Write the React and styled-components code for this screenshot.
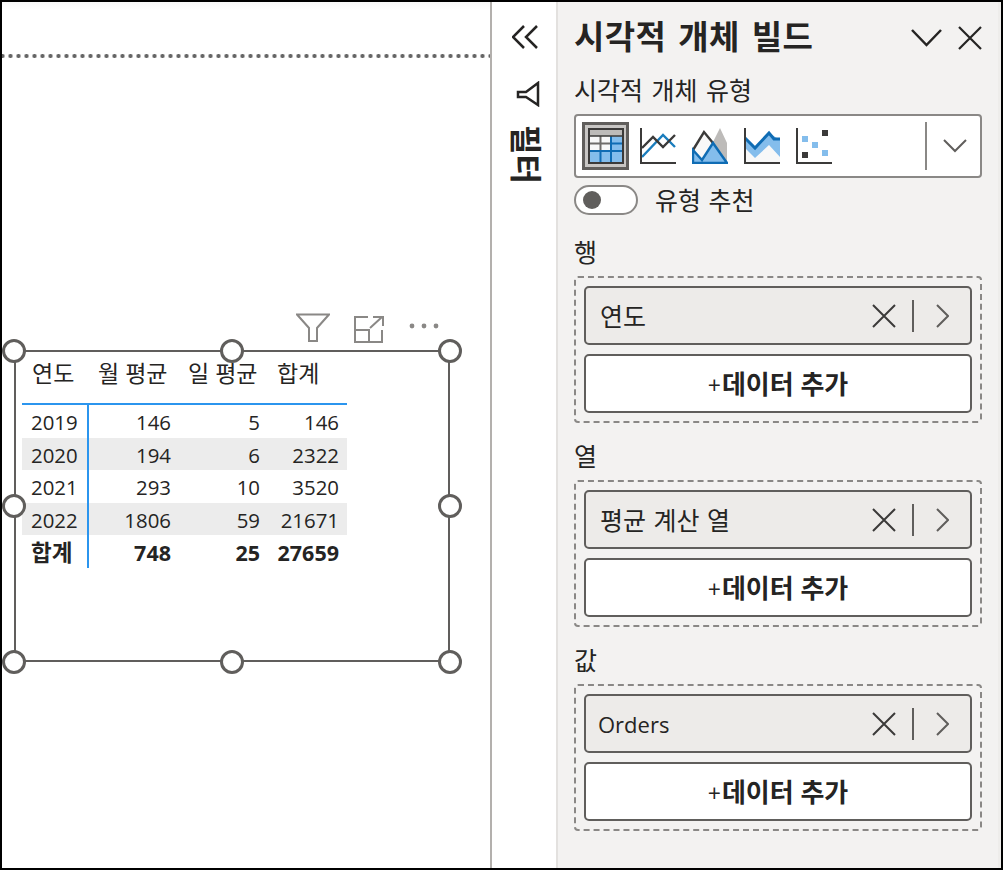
import React from "react";
import styled, { createGlobalStyle } from "styled-components";

const Global = createGlobalStyle`
  html, body { margin: 0; padding: 0; background: #fff; }
  body { font-family: "Open Sans", "Noto Sans CJK KR", sans-serif; color: #252423; }
`;

const Frame = styled.div`
  width: 1003px; height: 870px; box-sizing: border-box;
  border: 2px solid #000; display: flex; overflow: hidden; background: #fff;
`;
const Canvas = styled.main`
  position: relative; width: 488px; height: 100%; flex: none;
  border-right: 2px solid #b3b0ad; box-sizing: content-box;
  background: linear-gradient(#f8f8f8, #fff 8px);
`;
const DottedRule = styled.div`
  position: absolute; left: 0; top: 52px; width: 100%; height: 4px;
  background: radial-gradient(circle at 2px 2px, #666 1.9px, transparent 2.3px) -1.5px 0 / 8px 4px repeat-x;
`;
const VisualHeader = styled.div`
  position: absolute; left: 294px; top: 311px; display: flex; align-items: center;
`;
const Visual = styled.section`
  position: absolute; left: 12px; top: 348px; width: 436px; height: 312px; box-sizing: border-box;
  border: 2.5px solid #605e5c; padding: 1px 0 0 6px;
`;
const Handle = styled.span`
  position: absolute; width: 24px; height: 24px; box-sizing: border-box;
  border: 3px solid #605e5c; border-radius: 50%; background: #fff;
  left: ${p => p.$x}px; top: ${p => p.$y}px;
`;
const Table = styled.div`
  display: grid; grid-template-columns: 67px 90px 89px 79px; width: 325px;
  font-size: 20px;
`;
const Head = styled.div`
  height: 52px; padding-top: 4px; box-sizing: border-box; line-height: 32px; padding-left: ${p => p.$pl}px;
  border-bottom: 2px solid #2b95ee; white-space: nowrap; font-size: 23px;
`;
const Cell = styled.div`
  text-align: ${p => p.$first ? "left" : "right"};
  padding: ${p => p.$first ? "3px 0 0 9px" : "3px 8px 0 0"};
  background: ${p => p.$alt ? "#ececec" : "transparent"};
  font-weight: ${p => p.$bold ? 700 : 400};
  font-size: ${p => p.$bold ? (p.$first ? "22.5px" : "21.5px") : "20.4px"};
  line-height: 29px;
  border-right: ${p => p.$first ? "2px solid #2b95ee" : "0"};
  white-space: nowrap;
  box-sizing: border-box;
  height: 32.6px;
`;

const Rail = styled.aside`
  width: 64px; flex: none; display: flex; flex-direction: column; align-items: center;
  padding-top: 23px; border-right: 2px solid #e3e1df; box-sizing: content-box;
`;
const RailIcon = styled.div`
  display: flex; margin-bottom: ${p => p.$mb}px; margin-left: ${p => p.$ml}px;
`;
const RailLabel = styled.div`
  writing-mode: vertical-rl; text-orientation: sideways; font-weight: 700; font-size: 32px; line-height: 32px;
  color: #252423; margin-left: 4px;
`;
const Panel = styled.aside`
  flex: 1; background: #f3f2f1; padding: 0 16px 0 16px; box-sizing: border-box;
  border-right: 3px solid #eeedeb; min-width: 0;
`;
const TitleBar = styled.header`
  height: 70px; display: flex; align-items: center; justify-content: space-between;
`;
const Title = styled.h1`
  margin: 0; font-size: 33px; font-weight: 700; line-height: 70px; letter-spacing: 0.4px; word-spacing: 3px;
`;
const TitleIcons = styled.div`display: flex; align-items: center; gap: 16px; margin-top: 2px;`;
const Label = styled.div`
  font-size: 25px; line-height: 36px; height: 36px; word-spacing: 2px;
`;
const SectionLabel = styled(Label)`
  line-height: 41px;
`;
const TypeBox = styled.div`
  height: 64px; box-sizing: border-box; border: 2px solid #8a8886; border-radius: 4px; background: #fff;
  display: flex; align-items: center; padding: 0 13px 0 6px; margin-top: 6px;
`;
const SelectedType = styled.div`
  width: 47px; height: 48px; box-sizing: border-box; border: 3px solid #605e5c; background: #c8c6c4;
  display: flex; align-items: center; justify-content: center; margin-right: 11px;
`;
const TypeIcons = styled.div`display: flex; gap: 16px; flex: 1;`;
const TypeDivider = styled.div`width: 2px; height: 48px; background: #8a8886; margin-right: 16px;`;
const ToggleRow = styled.div`display: flex; align-items: center; margin-top: 7px; gap: 17px; height: 30px;`;
const Toggle = styled.div`
  width: 64px; height: 30px; box-sizing: border-box; border: 2px solid #8a8886; border-radius: 15px; background: #fff;
  display: flex; align-items: center; padding-left: 7px;
`;
const Knob = styled.span`width: 18px; height: 18px; border-radius: 50%; background: #605e5c;`;
const ToggleText = styled.div`font-size: 25px; line-height: 28px; word-spacing: 1px;`;
const Section = styled.section`margin-top: ${p => p.$mt}px;`;
const Well = styled.div`
  height: 147px; box-sizing: border-box; border: 2px dashed #8a8886; border-radius: 4px; padding: 8px;
  display: flex; flex-direction: column; gap: 9px; margin-top: 8px; background: transparent;
`;
const Field = styled.div`
  height: 59px; box-sizing: border-box; border: 2px solid #605e5c; border-radius: 5px; background: #edebe9;
  display: flex; align-items: center; padding: 0 21px 0 ${p => p.$pl}px;
`;
const FieldName = styled.span`
  flex: 1; font-size: ${p => p.$latin ? 22 : 25}px; word-spacing: 1px; white-space: nowrap; line-height: 30px;
  margin-top: ${p => p.$latin ? 1 : 0}px;
`;
const FieldSep = styled.span`width: 2px; height: 32px; background: #605e5c; margin: 0 22px 0 16px;`;
const AddButton = styled.div`
  height: 59px; box-sizing: border-box; border: 2px solid #605e5c; border-radius: 5px; background: #fff;
  display: flex; align-items: center; justify-content: center; font-size: 26px; font-weight: 700; white-space: nowrap;
  line-height: 30px; padding-top: 1px;
`;
const Plus = styled.span`font-weight: 400; font-size: 23px; margin: 2px 1px 0 0;`;

const Stroke = { fill: "none", stroke: "#252423", strokeWidth: 2 };

const XIcon = ({ s = 24, c = "#252423", w = 2 }) => (
  <svg width={s} height={s} viewBox="0 0 24 24"><path d="M1 1L23 23M23 1L1 23" fill="none" stroke={c} strokeWidth={w} /></svg>
);

const TableIcon = () => (
  <svg width="36" height="36" viewBox="0 0 36 36" style={{ display: "block" }}>
    <rect x="1" y="1" width="34" height="34" fill="#f8f8f8" />
    <rect x="2" y="2" width="32" height="6" fill="#bdbbb9" />
    <rect x="23" y="8" width="11" height="26" fill="#84bdec" />
    <rect x="2" y="23" width="32" height="11" fill="#84bdec" />
    <path d="M2 15.5H23M12.5 8V23" stroke="#6e6c6a" strokeWidth="2" fill="none" />
    <path d="M23 15.5H34M2 23H34M23 8V34M12.5 23V34" stroke="#0f6cb4" strokeWidth="2" fill="none" />
    <rect x="1" y="1" width="34" height="34" fill="none" stroke="#3b3a39" strokeWidth="2" />
    <path d="M2 8H34" stroke="#3b3a39" strokeWidth="1.5" />
  </svg>
);
const LineIcon = () => (
  <svg width="36" height="36" viewBox="0 0 36 36">
    <path d="M2 29L23 7L35 19" fill="none" stroke="#1a7dbd" strokeWidth="2.4" />
    <path d="M2 20L13 9L23 19L35 7" fill="none" stroke="#3b3a39" strokeWidth="2.4" />
    <path d="M1 0V35H36" fill="none" stroke="#3b3a39" strokeWidth="2" />
  </svg>
);
const AreaIcon = () => (
  <svg width="36" height="36" viewBox="0 0 36 36">
    <path d="M21 14L28 0L35 15V35H20Z" fill="#bdbbb9" />
    <path d="M1 22L12 4L21 15L10 31Z" fill="#f8f8f8" />
    <path d="M1 22L12 4L21 15" fill="none" stroke="#3b3a39" strokeWidth="2.4" />
    <path d="M1 22L10 32L21 15L35 35H1Z" fill="#84bdec" stroke="#0f6cb4" strokeWidth="2.4" />
  </svg>
);
const BandIcon = () => (
  <svg width="36" height="36" viewBox="0 0 36 36">
    <path d="M1 20L11 30L25 17L36 29V35H1Z" fill="#f8f8f8" />
    <path d="M1 10L11 20L25 5L36 12V29L25 17L11 30L1 20Z" fill="#84bdec" />
    <path d="M1 10L11 20L25 5L30 11H36" fill="none" stroke="#0f6cb4" strokeWidth="3" />
    <path d="M1 0V35H36" fill="none" stroke="#3b3a39" strokeWidth="2" />
  </svg>
);
const ScatterIcon = () => (
  <svg width="36" height="36" viewBox="0 0 36 36">
    <rect x="26" y="2" width="6" height="6" fill="#3b3a39" />
    <rect x="6" y="24" width="6" height="6" fill="#3b3a39" />
    <rect x="6" y="8" width="6" height="6" fill="#84bdec" />
    <rect x="16" y="14" width="6" height="6" fill="#84bdec" />
    <rect x="26" y="22" width="6" height="6" fill="#84bdec" />
    <path d="M1 0V35H36" fill="none" stroke="#3b3a39" strokeWidth="2" />
  </svg>
);

const rows = [
  ["2019", "146", "5", "146"],
  ["2020", "194", "6", "2322"],
  ["2021", "293", "10", "3520"],
  ["2022", "1806", "59", "21671"],
];

const handles = [
  [-2, -1], [216, -1], [434, -1],
  [-2, 154], [434, 154],
  [-2, 310], [216, 310], [434, 310],
];

const FieldWell = ({ label, field, pl, mt, latin }) => (
  <Section $mt={mt}>
    <SectionLabel>{label}</SectionLabel>
    <Well>
      <Field $pl={pl}>
        <FieldName $latin={latin}>{field}</FieldName>
        <XIcon c="#3b3a39" />
        <FieldSep />
        <svg width="13" height="24" viewBox="0 0 13 24"><path d="M1 1L12 12L1 23" fill="none" stroke="#605e5c" strokeWidth="2" /></svg>
      </Field>
      <AddButton><Plus>+</Plus>데이터 추가</AddButton>
    </Well>
  </Section>
);

export default function App() {
  return (
    <Frame>
      <Global />
      <Canvas>
        <DottedRule />
        <VisualHeader>
          <svg width="34" height="30" viewBox="0 0 34 30"><path d="M1 1.5H33L21 15V28H13V15Z" fill="none" stroke="#8a8886" strokeWidth="2" /></svg>
          <svg width="30" height="27" viewBox="0 0 30 27" style={{ marginLeft: 24, marginTop: 3 }}>
            <path d="M14 1H1V26H28V14M1 14H15V26" fill="none" stroke="#8a8886" strokeWidth="2" />
            <path d="M16 12L28 1M19 1H29V10" fill="none" stroke="#8a8886" strokeWidth="2" />
          </svg>
          <svg width="30" height="6" viewBox="0 0 30 6" style={{ marginLeft: 25, marginTop: -5 }}>
            <circle cx="3" cy="3" r="2.4" fill="#8a8886" /><circle cx="15" cy="3" r="2.4" fill="#8a8886" /><circle cx="27" cy="3" r="2.4" fill="#8a8886" />
          </svg>
        </VisualHeader>
        <Visual>
          <Table>
            <Head $pl={10}>연도</Head>
            <Head $pl={9}>월 평균</Head>
            <Head $pl={9}>일 평균</Head>
            <Head $pl={9}>합계</Head>
            {rows.map((r, i) => r.map((v, j) => (
              <Cell key={i + "-" + j} $first={j === 0} $alt={i % 2 === 1}>{v}</Cell>
            )))}
            <Cell $first $bold>합계</Cell>
            <Cell $bold>748</Cell>
            <Cell $bold>25</Cell>
            <Cell $bold>27659</Cell>
          </Table>
          {handles.map(([x, y]) => <Handle key={x + "_" + y} $x={x - 12} $y={y - 12} />)}
        </Visual>
      </Canvas>
      <Rail>
        <RailIcon $mb={32} $ml={1}>
          <svg width="26" height="24" viewBox="0 0 26 24"><path d="M12 1L1 12L12 23M25 1L14 12L25 23" {...Stroke} strokeWidth="2.5" /></svg>
        </RailIcon>
        <RailIcon $mb={18} $ml={8}>
          <svg width="24" height="26" viewBox="0 0 24 26"><path d="M22 2V24L10 16H2V11H10Z" {...Stroke} strokeWidth="2.5" /></svg>
        </RailIcon>
        <RailLabel>필터</RailLabel>
      </Rail>
      <Panel>
        <TitleBar>
          <Title>시각적 개체 빌드</Title>
          <TitleIcons>
            <svg width="31" height="18" viewBox="0 0 31 18"><path d="M1 1L15.5 16L30 1" {...Stroke} strokeWidth="2.5" /></svg>
            <XIcon w={2.2} />
          </TitleIcons>
        </TitleBar>
        <Label>시각적 개체 유형</Label>
        <TypeBox>
          <SelectedType><TableIcon /></SelectedType>
          <TypeIcons>
            <LineIcon /><AreaIcon /><BandIcon /><ScatterIcon />
          </TypeIcons>
          <TypeDivider />
          <svg width="24" height="14" viewBox="0 0 24 14"><path d="M1 1L12 12L23 1" fill="none" stroke="#605e5c" strokeWidth="2" /></svg>
        </TypeBox>
        <ToggleRow>
          <Toggle><Knob /></Toggle>
          <ToggleText>유형 추천</ToggleText>
        </ToggleRow>
        <FieldWell label="행" field="연도" pl={14} mt={17} />
        <FieldWell label="열" field="평균 계산 열" pl={14} mt={13} />
        <FieldWell label="값" field="Orders" pl={12} mt={13} latin />
      </Panel>
    </Frame>
  );
}
